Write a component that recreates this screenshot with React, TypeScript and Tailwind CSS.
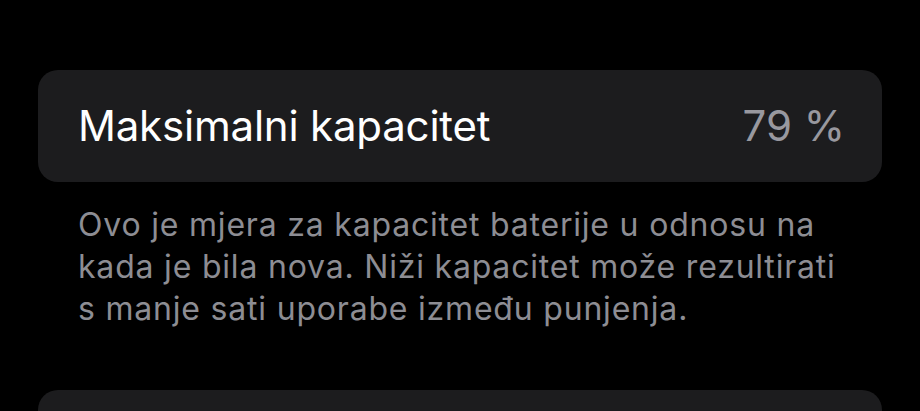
export default function App() {
  return (
    <div
      className="h-[411px] w-[920px] overflow-hidden bg-black px-[38px] pt-[70px]"
      style={{ fontFamily: 'Inter, "Noto Sans", sans-serif' }}
    >
      <div className="flex h-[112px] items-center justify-between rounded-[20px] bg-[#1c1c1e] pl-[40px] pr-[37px]">
        <span className="text-[42px] leading-none tracking-[-0.2px] text-white">Maksimalni kapacitet</span>
        <span className="text-[42px] leading-none text-[#98989f]">79 %</span>
      </div>
      <div className="mt-[22px] px-[40px] text-[32px] leading-[42px] tracking-[0.8px] text-[#8d8d93]">
        <div>Ovo je mjera za kapacitet baterije u odnosu na</div>
        <div>kada je bila nova. Niži kapacitet može rezultirati</div>
        <div>s manje sati uporabe između punjenja.</div>
      </div>
      <div className="mt-[60px] h-[100px] rounded-[20px] bg-[#1c1c1e]" />
    </div>
  );
}
